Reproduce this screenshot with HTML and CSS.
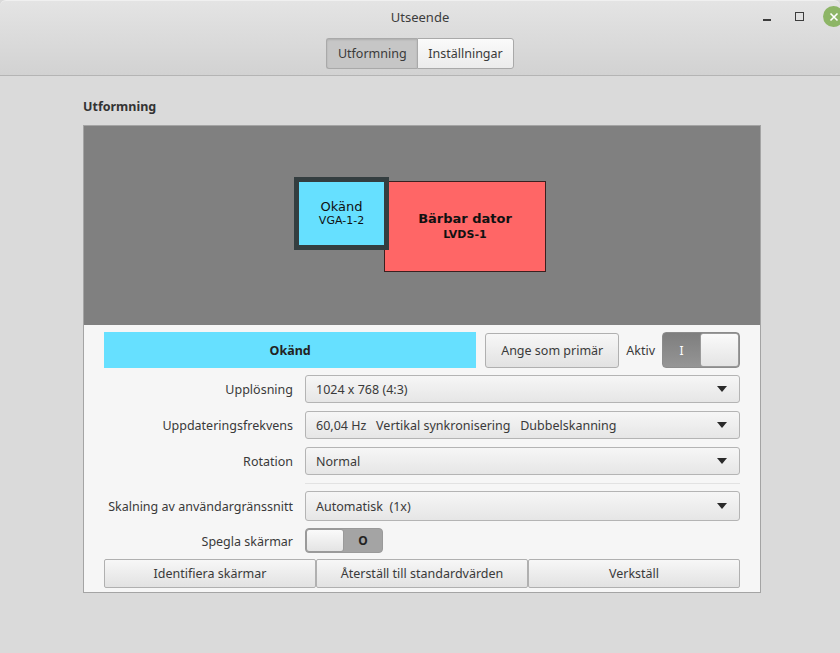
FILE: index.html
```html
<!DOCTYPE html>
<html lang="sv">
<head>
    <meta charset="UTF-8">
    <title>Utseende</title>
    <link rel="stylesheet" href="styles.css">
</head>
<body>
    <div class="window">
        <div class="header">
            <div class="titlebar">
                <span class="title">Utseende</span>
                <div class="wm-buttons">
                    <span class="wm-min"></span>
                    <span class="wm-max"></span>
                    <span class="wm-close">
                        <svg width="10" height="10" viewBox="0 0 10 10">
                            <path d="M1.5 1.5 L8.5 8.5 M8.5 1.5 L1.5 8.5" stroke="#fff" stroke-width="1.6" fill="none"/>
                        </svg>
                    </span>
                </div>
            </div>
            <div class="tabs">
                <button class="tab active">Utformning</button>
                <button class="tab">Inställningar</button>
            </div>
        </div>

        <div class="content">
            <h4 class="section-title">Utformning</h4>

            <div class="frame">
                <div class="preview">
                    <div class="monitor laptop">
                        <strong>Bärbar dator</strong>
                        <small>LVDS-1</small>
                    </div>
                    <div class="monitor vga selected">
                        <span>Okänd</span>
                        <small>VGA-1-2</small>
                    </div>
                </div>

                <div class="controls">
                    <div class="output-row">
                        <div class="output-name">Okänd</div>
                        <button class="btn primary-btn">Ange som primär</button>
                        <span class="label">Aktiv</span>
                        <div class="switch on">
                            <span class="switch-mark">I</span>
                            <span class="knob"></span>
                        </div>
                    </div>

                    <div class="form">
                        <label>Upplösning</label>
                        <div class="combo">1024 x 768 (4:3)</div>

                        <label>Uppdateringsfrekvens</label>
                        <div class="combo">60,04 Hz &nbsp; Vertikal synkronisering &nbsp; Dubbelskanning</div>

                        <label>Rotation</label>
                        <div class="combo">Normal</div>

                        <span></span>
                        <div class="separator"></div>

                        <label>Skalning av användargränssnitt</label>
                        <div class="combo tall">Automatisk &nbsp;(1x)</div>

                        <label>Spegla skärmar</label>
                        <div class="switch off small">
                            <span class="knob"></span>
                            <span class="switch-mark">O</span>
                        </div>
                    </div>

                    <div class="actions">
                        <button class="btn">Identifiera skärmar</button>
                        <button class="btn">Återställ till standardvärden</button>
                        <button class="btn">Verkställ</button>
                    </div>
                </div>
            </div>
        </div>
    </div>
</body>
</html>
```

FILE: styles.css
```css
* {
    margin: 0;
    padding: 0;
    box-sizing: border-box;
}

body {
    width: 840px;
    height: 653px;
    overflow: hidden;
    background: #dadada;
    font-family: "Noto Sans", "DejaVu Sans", sans-serif;
    font-size: 12.5px;
    color: #3a3a3a;
}

.window {
    height: 100%;
    display: flex;
    flex-direction: column;
}

/* header: title bar + stack switcher share one gradient */
.header {
    height: 76px;
    background: linear-gradient(to bottom, #e4e4e4, #d2d2d2);
    border-top: 1px solid #f0f0f0;
    border-bottom: 1px solid #b4b4b4;
    border-radius: 6px 6px 0 0;
}

.titlebar {
    height: 36px;
    display: flex;
    align-items: center;
    justify-content: center;
    position: relative;
}

.title {
    font-size: 13px;
    color: #3c3c3c;
    margin-top: -4px;
}

.wm-buttons {
    position: absolute;
    right: -4px;
    top: 6px;
    display: flex;
    align-items: center;
}

.wm-min {
    width: 8px;
    height: 2px;
    background: #3c3c3c;
    margin-top: 6px;
    margin-right: 24px;
}

.wm-max {
    width: 9px;
    height: 9px;
    border: 1.5px solid #3c3c3c;
    margin-right: 19px;
    margin-top: -2px;
}

.wm-close {
    width: 21px;
    height: 21px;
    border-radius: 50%;
    background: #8db566;
    display: flex;
    align-items: center;
    justify-content: center;
    margin-top: -1px;
}

.tabs {
    display: flex;
    justify-content: center;
    margin-top: 1px;
}

.tab {
    font-family: inherit;
    font-size: 12.5px;
    color: #3a3a3a;
    height: 31px;
    padding: 0 10px;
    border: 1px solid #a9a9a9;
    background: linear-gradient(to bottom, #fafafa, #ececec);
}

.tab:first-child {
    border-radius: 3px 0 0 3px;
    border-right: none;
}

.tab:last-child {
    border-radius: 0 3px 3px 0;
}

.tab.active {
    background: #c6c6c6;
    box-shadow: inset 0 1px 2px rgba(0,0,0,0.12);
    width: 91px;
}

.content {
    flex: 1;
    padding: 22px 79px 0 83px;
}

.section-title {
    font-size: 12.5px;
    font-weight: bold;
    color: #333;
    height: 27px;
}

.frame {
    width: 678px;
    border: 1px solid #a4a4a4;
    background: #f6f6f6;
}

/* monitor layout canvas */
.preview {
    height: 199px;
    background: #808080;
    position: relative;
}

.monitor {
    position: absolute;
    display: flex;
    flex-direction: column;
    align-items: center;
    justify-content: center;
    font-family: "DejaVu Sans", sans-serif;
    color: #111;
}

.monitor small {
    font-size: 11px;
}

.laptop {
    left: 300px;
    top: 55px;
    width: 162px;
    height: 91px;
    background: #ff6666;
    border: 1px solid #3a2020;
    padding-bottom: 2px;
}

.laptop strong {
    font-size: 13px;
    margin-bottom: 2px;
}

.laptop small {
    font-weight: bold;
}

.vga {
    left: 210px;
    top: 51px;
    width: 95px;
    height: 73px;
    background: #66e0ff;
    border: 5px solid rgba(48,48,48,0.92);
    padding-bottom: 1px;
}

.vga span {
    font-size: 13px;
}

.controls {
    padding: 7px 20px 4px 20px;
}

.output-row {
    display: flex;
    align-items: center;
    height: 36px;
}

.output-name {
    flex: 1;
    align-self: stretch;
    background: #66e0ff;
    display: flex;
    align-items: center;
    justify-content: center;
    font-weight: bold;
    color: #222;
    margin-right: 9px;
}

.btn {
    font-family: inherit;
    font-size: 12.5px;
    color: #3a3a3a;
    border: 1px solid #b0b0b0;
    border-radius: 3px;
    background: linear-gradient(to bottom, #f7f7f7, #e2e2e2);
}

.primary-btn {
    width: 134px;
    height: 35px;
}

.label {
    margin: 0 7px;
}

.switch {
    width: 78px;
    height: 36px;
    border: 1px solid #8c8c8c;
    border-radius: 4px;
    display: flex;
    overflow: hidden;
}

.switch.on {
    background: linear-gradient(to bottom, #7e7e7e, #959595);
}

.switch.off {
    background: #a4a4a4;
    border-color: #9a9a9a;
}

.switch-mark {
    flex: 1;
    display: flex;
    align-items: center;
    justify-content: center;
    font-size: 12px;
}

.switch.on .switch-mark {
    color: #fff;
}

.switch.off .switch-mark {
    color: #222;
    font-weight: bold;
}

.knob {
    width: 39px;
    background: linear-gradient(to bottom, #fafafa, #e4e4e4);
    border-radius: 3px;
    border: 1px solid #9a9a9a;
}

.switch.small {
    height: 25px;
}

.switch.small .knob {
    width: 38px;
}

.form {
    display: grid;
    grid-template-columns: 189px 435px;
    column-gap: 12px;
    row-gap: 8px;
    align-items: center;
    margin-top: 7px;
}

.form label {
    text-align: right;
}

.combo {
    height: 28px;
    border: 1px solid #b4b4b4;
    border-radius: 3px;
    background: linear-gradient(to bottom, #f6f6f6, #e6e6e6);
    display: flex;
    align-items: center;
    padding-left: 10px;
    position: relative;
}

/* dropdown arrow */
.combo::after {
    content: "";
    position: absolute;
    right: 12px;
    top: 50%;
    margin-top: -3px;
    border-left: 5px solid transparent;
    border-right: 5px solid transparent;
    border-top: 6px solid #2a2a2a;
}

.combo.tall {
    height: 30px;
}

.separator {
    height: 1px;
    background: #e2e2e2;
    margin: -1px 0 -2px;
}

.form .switch.small {
    margin-top: -1px;
}

.actions {
    display: flex;
    margin-top: 6px;
}

.actions .btn {
    flex: 1;
    height: 29px;
    border-radius: 2px;
}
```
